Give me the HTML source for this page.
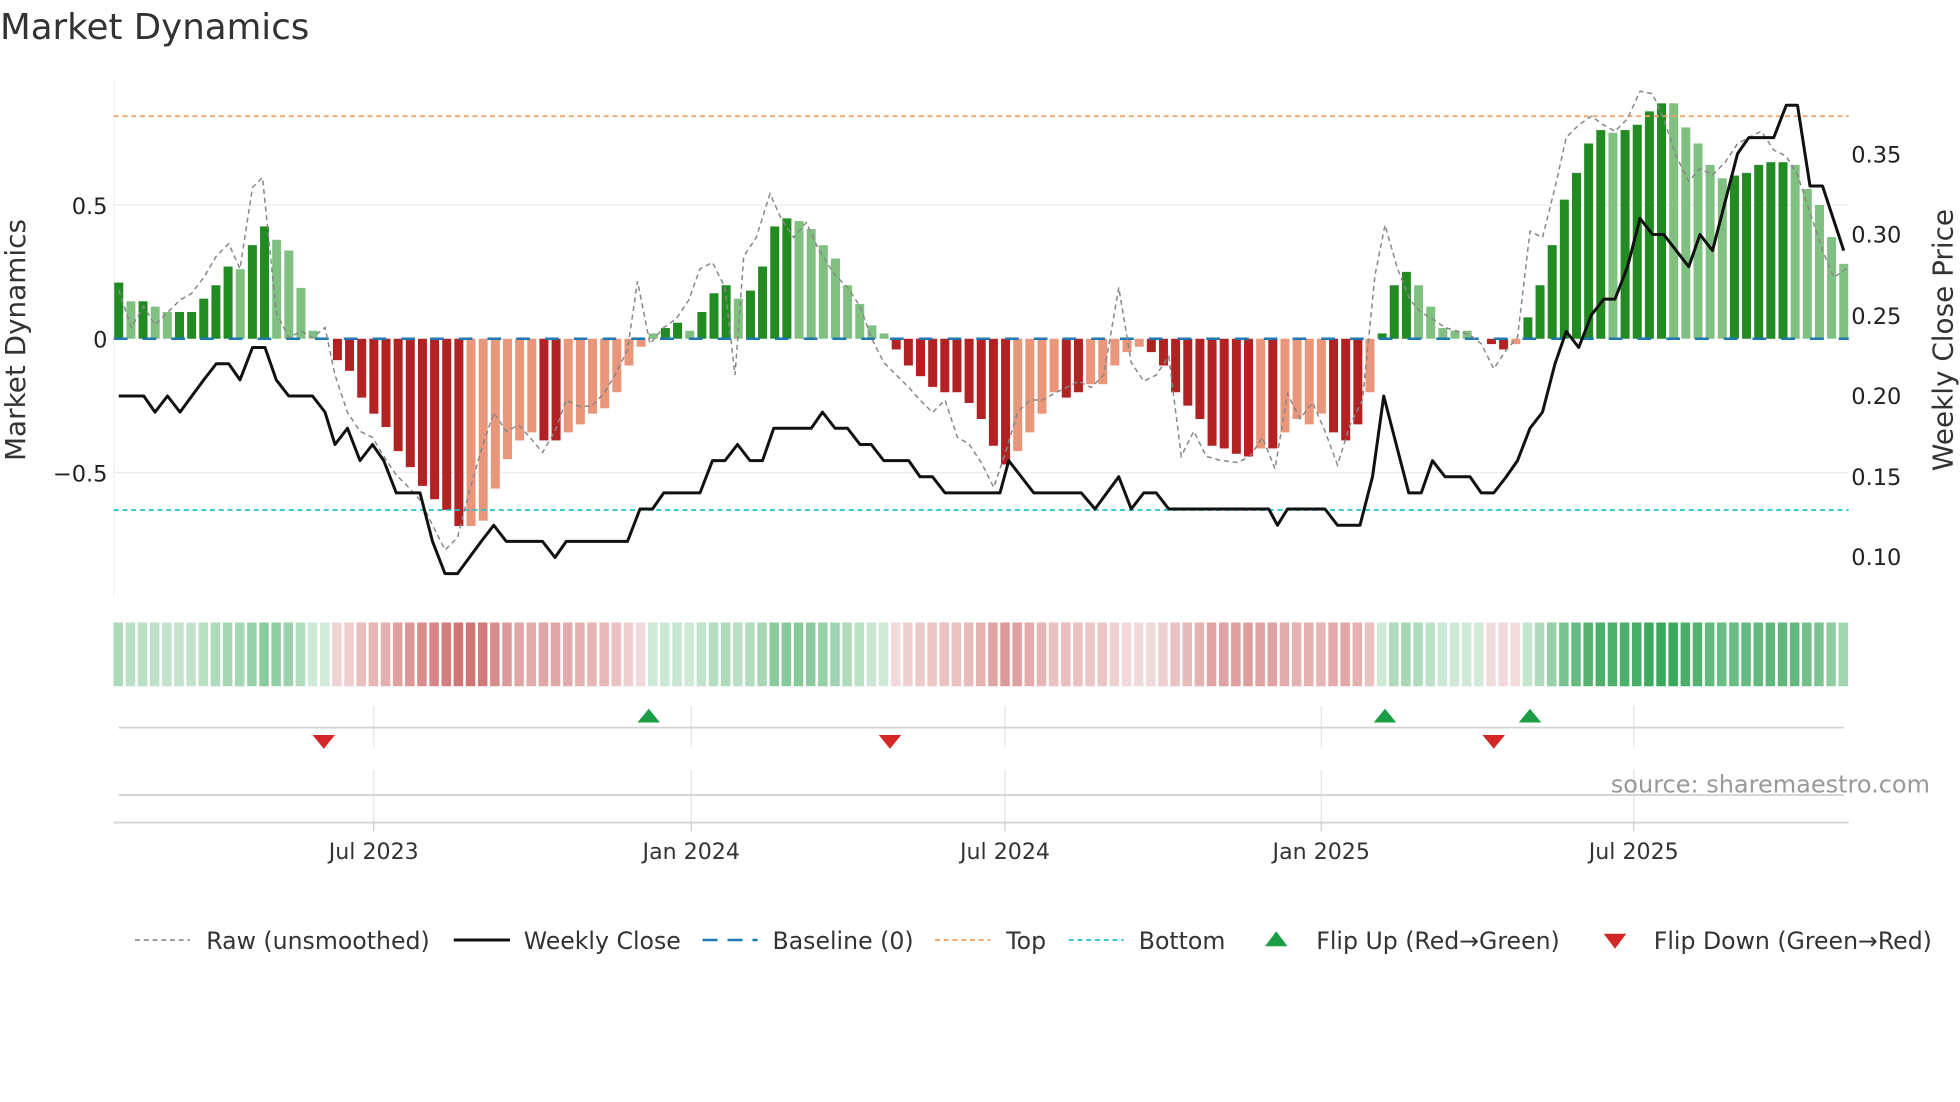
<!DOCTYPE html>
<html><head><meta charset="utf-8"><style>
html,body{margin:0;padding:0;background:#fff;}
svg{display:block;font-family:"DejaVu Sans","Liberation Sans",sans-serif;}
</style></head><body>
<svg id="s" width="1960" height="1102" viewBox="0 0 1568 881.6" xmlns="http://www.w3.org/2000/svg">
<rect width="1568" height="881.6" fill="#fff"/>
<text x="0" y="31" font-size="28.5" fill="#333">Market Dynamics</text>
<line x1="91" y1="65" x2="91" y2="478" stroke="#eef0f4" stroke-width="1"/>
<line x1="91" y1="164" x2="1479" y2="164" stroke="#ececec"/>
<line x1="91" y1="378" x2="1479" y2="378" stroke="#ececec"/>
<g id="bars"></g>
<line x1="91" y1="93" x2="1479" y2="93" stroke="#f0a060" stroke-width="1.4" stroke-dasharray="4,3"/>
<line x1="91" y1="408" x2="1479" y2="408" stroke="#22c3d3" stroke-width="1.4" stroke-dasharray="4,3"/>
<line x1="91" y1="271" x2="1479" y2="271" stroke="#1f77b4" stroke-width="2" stroke-dasharray="11,12"/>
<polyline id="raw" fill="none" stroke="#888" stroke-width="1.2" stroke-dasharray="4,3"/>
<polyline id="price" fill="none" stroke="#111" stroke-width="2.4" stroke-linejoin="round"/>
<g font-size="18" fill="#222">
<text x="86" y="171" text-anchor="end">0.5</text>
<text x="86" y="278" text-anchor="end">0</text>
<text x="86" y="385" text-anchor="end">−0.5</text>
<text x="1481" y="130">0.35</text>
<text x="1481" y="194">0.30</text>
<text x="1481" y="259">0.25</text>
<text x="1481" y="323">0.20</text>
<text x="1481" y="388">0.15</text>
<text x="1481" y="452">0.10</text>
</g>
<text transform="translate(20,272) rotate(-90)" font-size="22.3" fill="#333" text-anchor="middle">Market Dynamics</text>
<text transform="translate(1562,272) rotate(-90)" font-size="22.3" fill="#333" text-anchor="middle">Weekly Close Price</text>
<g id="strip"></g>
<g stroke="#e4e4e4" stroke-width="1">
<line x1="299" y1="565" x2="299" y2="598"/><line x1="553" y1="565" x2="553" y2="598"/><line x1="804" y1="565" x2="804" y2="598"/><line x1="1057" y1="565" x2="1057" y2="598"/><line x1="1307" y1="565" x2="1307" y2="598"/>
<line x1="299" y1="616" x2="299" y2="658"/><line x1="553" y1="616" x2="553" y2="658"/><line x1="804" y1="616" x2="804" y2="658"/><line x1="1057" y1="616" x2="1057" y2="658"/><line x1="1307" y1="616" x2="1307" y2="658"/>
</g>
<line x1="95" y1="582" x2="1475" y2="582" stroke="#d4d4d4" stroke-width="1.5"/>
<line x1="95" y1="636" x2="1475" y2="636" stroke="#d4d4d4" stroke-width="1.5"/>
<line x1="91" y1="658" x2="1479" y2="658" stroke="#d4d4d4" stroke-width="1.5"/>
<g stroke="#ccc"><line x1="299" y1="658" x2="299" y2="665"/><line x1="553" y1="658" x2="553" y2="665"/><line x1="804" y1="658" x2="804" y2="665"/><line x1="1057" y1="658" x2="1057" y2="665"/><line x1="1307" y1="658" x2="1307" y2="665"/></g>
<g fill="#1a9e44">
<polygon points="510,578 528,578 519,567"/><polygon points="1099,578 1117,578 1108,567"/><polygon points="1215,578 1233,578 1224,567"/>
</g>
<g fill="#d62728">
<polygon points="250,588 268,588 259,599"/><polygon points="703,588 721,588 712,599"/><polygon points="1186,588 1204,588 1195,599"/>
</g>
<text x="1544" y="634" font-size="19.2" fill="#999" text-anchor="end">source: sharemaestro.com</text>
<g font-size="17.7" fill="#333" text-anchor="middle">
<text x="299" y="687">Jul 2023</text><text x="553" y="687">Jan 2024</text><text x="804" y="687">Jul 2024</text><text x="1057" y="687">Jan 2025</text><text x="1307" y="687">Jul 2025</text>
</g>
<g font-size="18.9" fill="#333">
<line x1="108" y1="752" x2="152" y2="752" stroke="#888" stroke-width="1.3" stroke-dasharray="4,3"/>
<text x="165" y="759">Raw (unsmoothed)</text>
<line x1="363" y1="752" x2="408" y2="752" stroke="#111" stroke-width="2.4"/>
<text x="419" y="759">Weekly Close</text>
<line x1="562" y1="752" x2="606" y2="752" stroke="#1f77b4" stroke-width="2" stroke-dasharray="12,8"/>
<text x="618" y="759">Baseline (0)</text>
<line x1="748" y1="752" x2="792" y2="752" stroke="#f0a060" stroke-width="1.4" stroke-dasharray="4,3"/>
<text x="805" y="759">Top</text>
<line x1="855" y1="752" x2="899" y2="752" stroke="#22c3d3" stroke-width="1.4" stroke-dasharray="4,3"/>
<text x="911" y="759">Bottom</text>
<polygon points="1012,757 1030,757 1021,745" fill="#1a9e44"/>
<text x="1053" y="759">Flip Up (Red→Green)</text>
<polygon points="1283,747 1301,747 1292,759" fill="#d62728"/>
<text x="1323" y="759">Flip Down (Green→Red)</text>
</g>
</svg>
<script>
var V=[[.21,1],[.14,0],[.14,1],[.12,0],[.1,0],[.1,1],[.1,1],[.15,1],[.2,1],[.27,1],[.26,0],[.35,1],[.42,1],[.37,0],[.33,0],[.19,0],[.03,0],[0,0],
[-.08,1],[-.12,1],[-.22,1],[-.28,1],[-.33,1],[-.42,1],[-.48,1],[-.55,1],[-.6,1],[-.64,1],[-.7,1],[-.7,0],[-.68,0],[-.56,0],[-.45,0],[-.38,0],[-.35,0],[-.38,1],[-.38,1],[-.35,0],[-.32,0],[-.28,0],[-.26,0],[-.2,0],[-.1,0],[-.03,0],
[.02,0],[.04,1],[.06,1],[.03,0],[.1,1],[.17,1],[.2,1],[.15,0],[.18,1],[.27,1],[.42,1],[.45,1],[.44,0],[.41,0],[.35,0],[.3,0],[.2,0],[.13,0],[.05,0],[.02,0],
[-.04,1],[-.1,1],[-.14,1],[-.18,1],[-.2,1],[-.2,1],[-.24,1],[-.3,1],[-.4,1],[-.47,1],[-.42,0],[-.35,0],[-.28,0],[-.2,0],[-.22,1],[-.2,1],[-.17,0],[-.17,0],[-.1,0],[-.05,0],[-.03,0],[-.05,1],[-.1,1],[-.2,1],[-.25,1],[-.3,1],[-.4,1],[-.41,1],[-.43,1],[-.44,1],[-.41,0],[-.41,1],[-.35,0],[-.3,0],[-.32,0],[-.28,0],[-.35,1],[-.38,1],[-.32,1],[-.2,0],
[.02,1],[.2,1],[.25,1],[.2,0],[.12,0],[.04,0],[.03,0],[.03,0],[0,0],[-.02,1],[-.04,1],[-.02,0],
[.08,1],[.2,1],[.35,1],[.52,1],[.62,1],[.73,1],[.78,1],[.77,0],[.78,1],[.8,1],[.85,1],[.88,1],[.88,0],[.79,0],[.73,0],[.65,0],[.6,0],[.61,1],[.62,1],[.65,1],[.66,1],[.66,1],[.65,0],[.56,0],[.5,0],[.38,0],[.28,0]];
var ns="http://www.w3.org/2000/svg",b=document.getElementById('bars'),st=document.getElementById('strip');
function r(g,x,y,w,h,f){var e=document.createElementNS(ns,'rect');e.setAttribute('x',x);e.setAttribute('y',y);e.setAttribute('width',w);e.setAttribute('height',h);e.setAttribute('fill',f);g.appendChild(e);}
var step=(1475-95)/(V.length-1);
V.forEach(function(d,i){var x=95+step*i,v=d[0],h=Math.abs(v)*214;
 var c=v>=0?(d[1]?'#228b22':'#80c080'):(d[1]?'#b22222':'#e9967a');
 if(h>0.5)r(b,x-3.6,v>=0?271-h:271,7.2,h,c);
 var a,col;
 if(v>=0){a=0.22+0.75*Math.min(1,v/0.9);col='rgba(49,163,84,'+a.toFixed(2)+')';}
 else{a=0.18+0.6*Math.min(1,-v/0.7);col='rgba(196,80,80,'+a.toFixed(2)+')';}
 r(st,x-4.2,498,7.6,51,col);
});
var P=[[95,.20],[115,.20],[124,.19],[134,.20],[144,.19],[163,.21],[173,.22],[183,.22],[192,.21],[202,.23],[212,.23],[221,.21],[231,.20],[250,.20],[260,.19],[268,.17],[278,.18],[288,.16],[298,.17],[307,.16],[317,.14],[336,.14],[346,.11],[356,.09],[366,.09],[385,.11],[395,.12],[405,.11],[434,.11],[444,.10],[453,.11],[502,.11],[512,.13],[522,.13],[531,.14],[560,.14],[570,.16],[580,.16],[590,.17],[600,.16],[610,.16],[619,.18],[649,.18],[658,.19],[668,.18],[678,.18],[688,.17],[697,.17],[707,.16],[727,.16],[736,.15],[746,.15],[756,.14],[800,.14],[807,.16],[817,.15],[827,.14],[865,.14],[876,.13],[895,.15],[905,.13],[915,.14],[925,.14],[935,.13],[1015,.13],[1022,.12],[1030,.13],[1060,.13],[1070,.12],[1088,.12],[1098,.15],[1107,.20],[1117,.17],[1127,.14],[1137,.14],[1146,.16],[1156,.15],[1176,.15],[1185,.14],[1195,.14],[1205,.15],[1214,.16],[1224,.18],[1234,.19],[1244,.22],[1253,.24],[1263,.23],[1273,.25],[1283,.26],[1292,.26],[1302,.28],[1312,.31],[1322,.30],[1331,.30],[1341,.29],[1351,.28],[1360,.30],[1370,.29],[1380,.32],[1390,.35],[1399,.36],[1419,.36],[1429,.38],[1438,.38],[1448,.33],[1458,.33],[1475,.29]];
document.getElementById('price').setAttribute('points',P.map(function(p){return p[0]+','+(446-(p[1]-0.1)*1292).toFixed(1)}).join(' '));
var R=[95,232,105,262,115,245,124,260,134,250,144,240,153,235,163,222,173,205,183,195,192,215,202,150,210,142,221,250,231,270,241,265,250,270,260,262,268,300,278,330,288,345,298,350,307,365,317,380,327,390,336,400,346,420,356,440,366,430,375,395,385,360,395,330,405,345,415,340,424,350,434,362,444,345,453,320,463,325,473,325,483,315,492,300,502,280,510,225,520,275,531,262,541,255,551,240,560,215,570,210,580,230,588,300,595,205,605,190,616,155,625,175,635,190,645,178,655,200,668,220,678,230,688,245,697,270,707,290,717,300,727,310,736,320,746,330,756,320,766,350,775,355,785,370,795,390,805,360,814,330,824,320,834,320,843,315,853,310,863,305,873,310,883,300,895,230,905,290,915,305,925,300,935,285,945,365,955,345,965,365,975,368,990,370,1000,365,1010,350,1020,375,1030,315,1040,335,1050,322,1060,345,1070,372,1080,340,1090,320,1100,220,1108,180,1118,215,1128,240,1137,250,1146,255,1156,262,1166,265,1176,268,1185,275,1195,295,1205,280,1214,270,1224,185,1234,190,1244,150,1253,110,1263,100,1273,93,1283,100,1292,105,1302,95,1312,73,1322,75,1331,95,1341,125,1351,145,1360,135,1370,140,1380,130,1390,115,1399,110,1409,105,1419,120,1429,125,1438,140,1448,170,1458,200,1467,222,1477,215];
var s=[];for(var i=0;i<R.length;i+=2)s.push(R[i]+','+R[i+1]);
document.getElementById('raw').setAttribute('points',s.join(' '));
</script>
</body></html>
